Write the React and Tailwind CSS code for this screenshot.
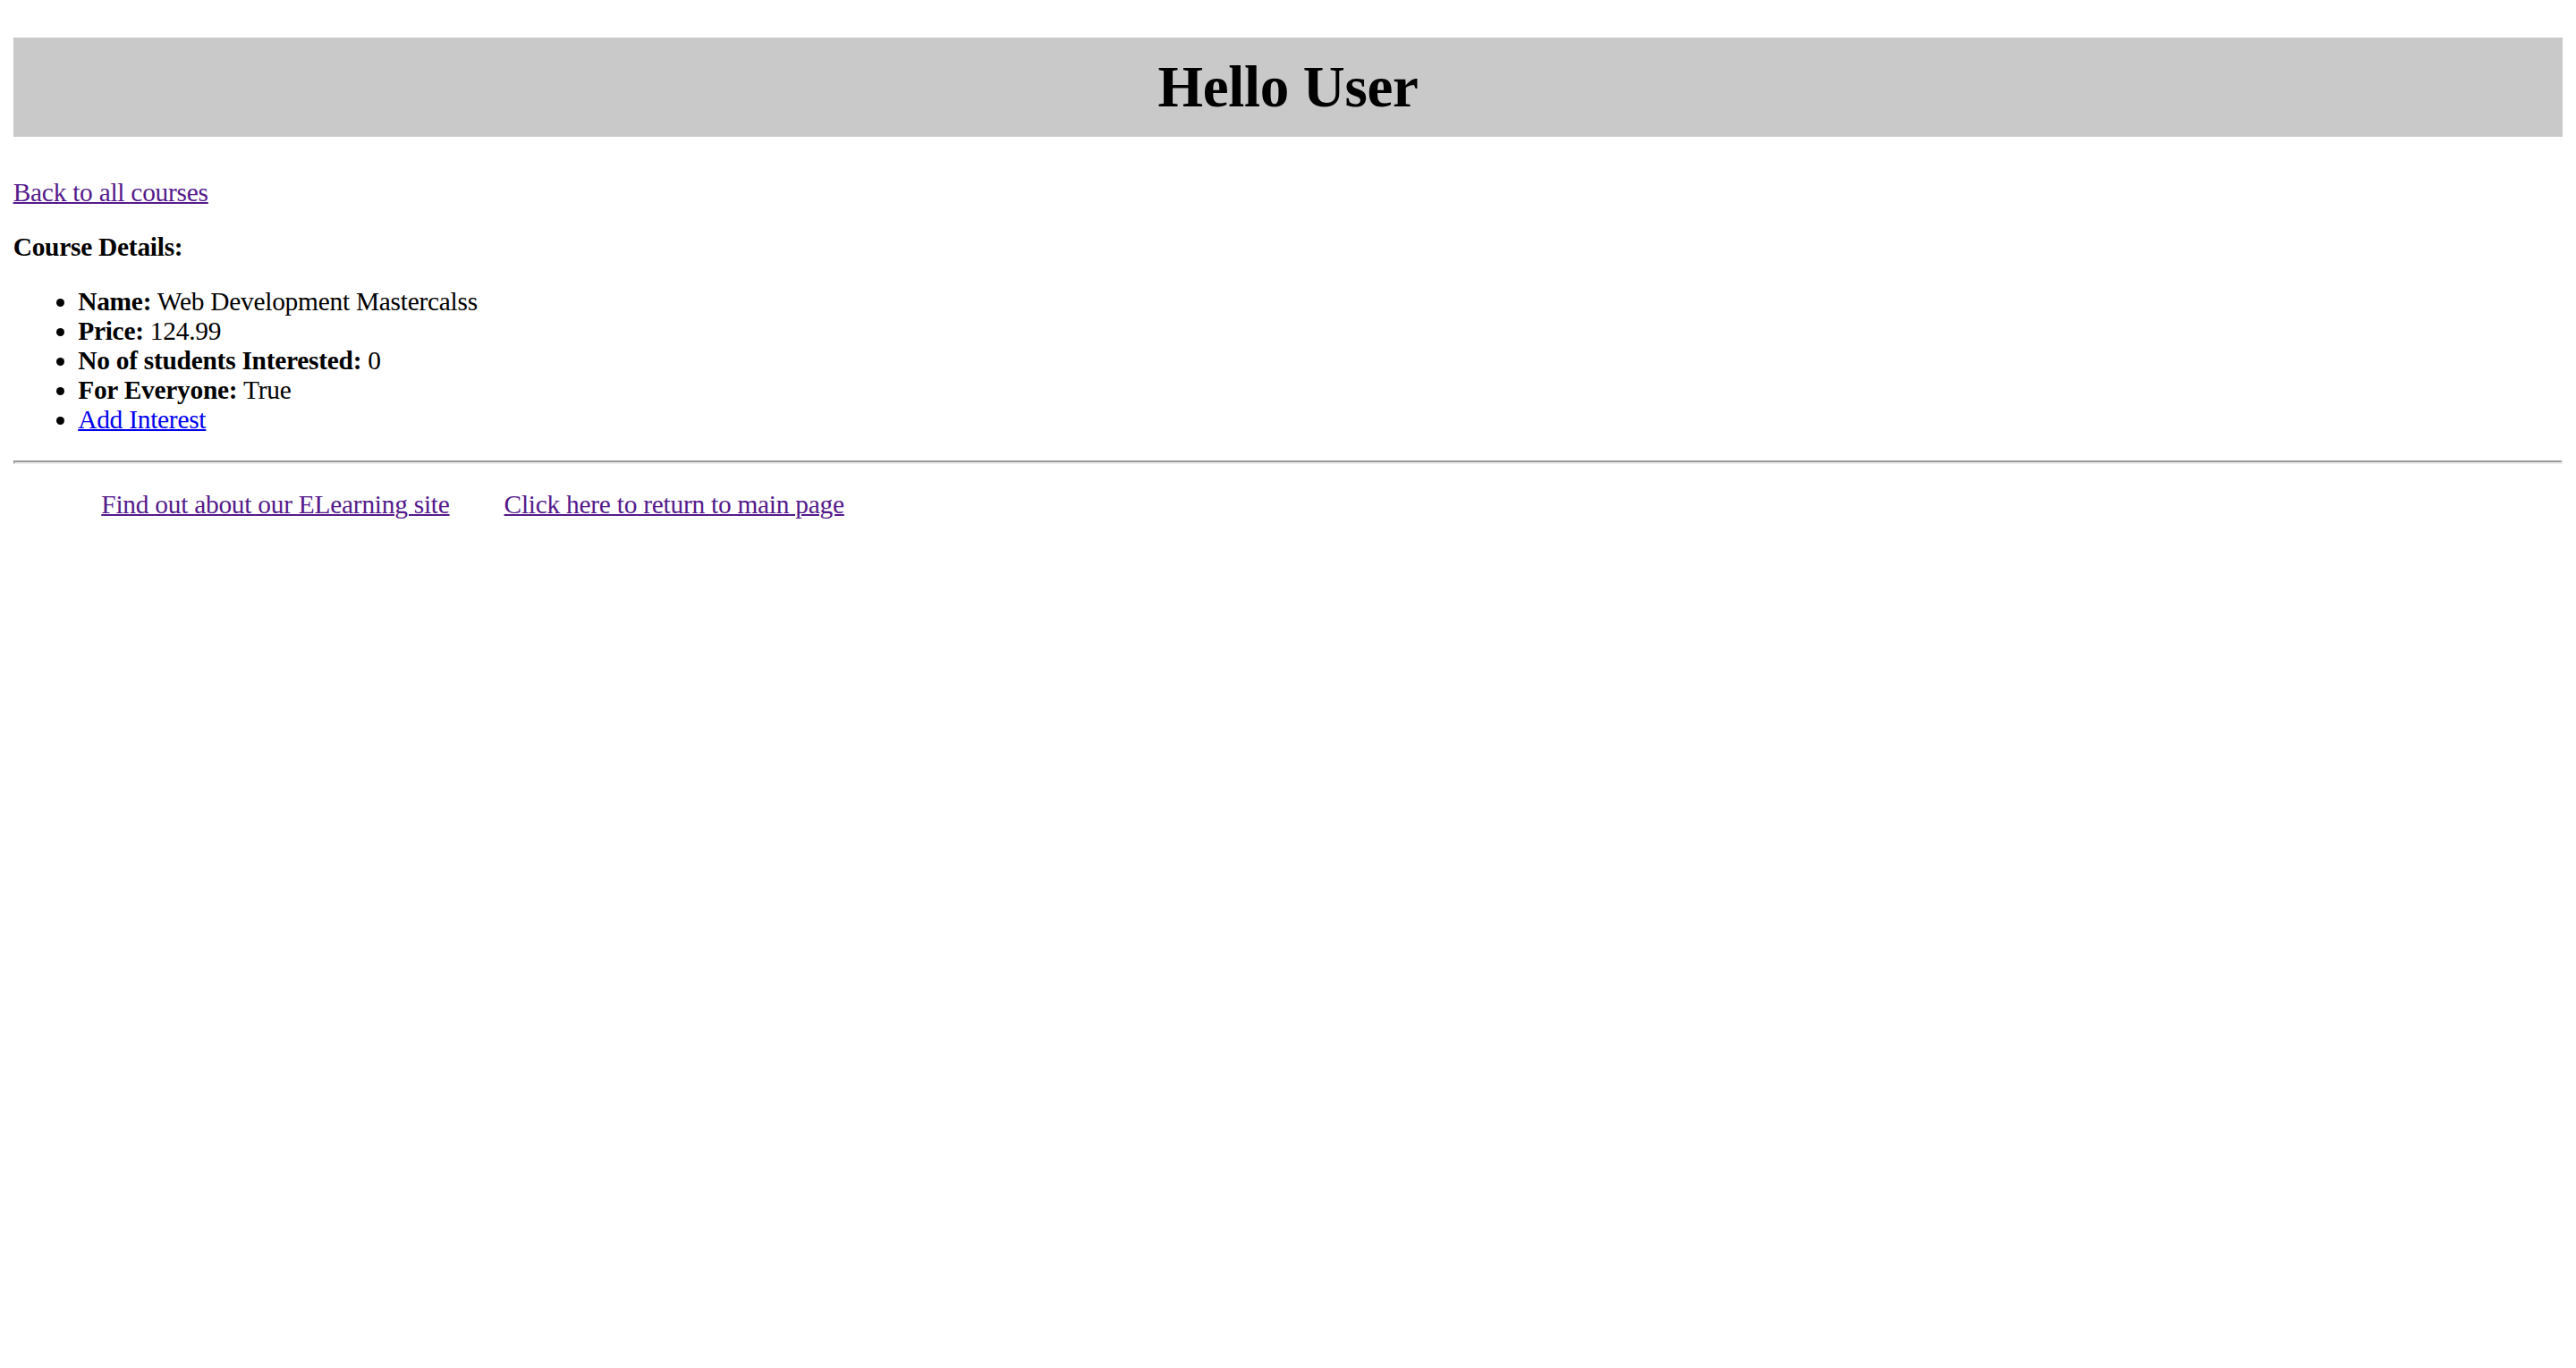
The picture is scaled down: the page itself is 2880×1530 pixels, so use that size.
import React from 'react';

const details = [
  { label: 'Name:', value: 'Web Development Mastercalss' },
  { label: 'Price:', value: '124.99' },
  { label: 'No of students Interested:', value: '0' },
  { label: 'For Everyone:', value: 'True' },
];

export default function App() {
  return (
    <div className="min-h-screen bg-white px-[14.7px] text-[29.4px] leading-[33px] tracking-[-0.25px] text-black font-['Liberation_Serif','Times_New_Roman',serif]">
      {/* Greeting banner */}
      <div className="mt-[42px] bg-[#c9c9c9] pt-[3px] pb-[2.4px] text-center">
        <h1 className="text-[65px] font-bold leading-[105.6px] tracking-[-0.3px]">Hello User</h1>
      </div>

      <p className="mt-[46px]">
        <a href="#" className="text-[#551a8b] underline decoration-2">
          Back to all courses
        </a>
      </p>

      <p className="mt-[27.6px] font-bold">Course Details:</p>

      <ul className="mt-[28px] list-disc pl-[72.5px]">
        {details.map(item => (
          <li key={item.label}>
            <b className="font-bold">{item.label}</b> {item.value}
          </li>
        ))}
        <li>
          <a href="#" className="text-[#0000ee] underline decoration-2">
            Add Interest
          </a>
        </li>
      </ul>

      <hr className="mt-[29.4px] h-0 border-2 border-t-[#9a9a9a] border-l-[#9a9a9a] border-b-[#eeeeee] border-r-[#eeeeee]" />

      {/* Footer links */}
      <div className="mt-[28.6px] flex gap-[61px] pl-[98.6px]">
        <a href="#" className="text-[#551a8b] underline decoration-2">
          Find out about our ELearning site
        </a>
        <a href="#" className="text-[#551a8b] underline decoration-2">
          Click here to return to main page
        </a>
      </div>
    </div>
  );
}
